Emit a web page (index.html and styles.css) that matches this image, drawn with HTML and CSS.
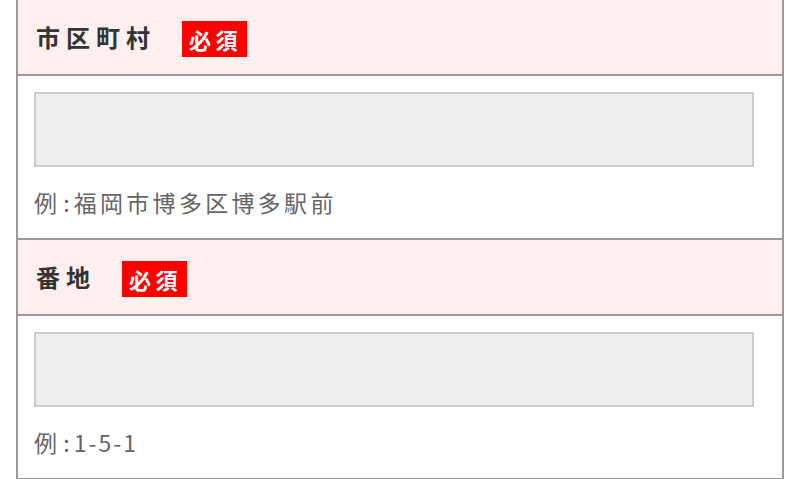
FILE: index.html
```html
<!DOCTYPE html>
<html lang="ja">
<head>
<meta charset="utf-8">
<title>住所入力</title>
<link rel="stylesheet" href="styles.css">
</head>
<body>
<div class="form">
  <section class="field">
    <div class="field-head">
      <span class="label">市区町村</span>
      <span class="badge">必須</span>
    </div>
    <div class="field-body">
      <input class="text-input" type="text">
      <p class="example">例<span class="colon">:</span>福岡市博多区博多駅前</p>
    </div>
  </section>
  <section class="field">
    <div class="field-head">
      <span class="label">番地</span>
      <span class="badge">必須</span>
    </div>
    <div class="field-body">
      <input class="text-input" type="text">
      <p class="example">例<span class="colon">:</span><span class="num">1-5-1</span></p>
    </div>
  </section>
</div>
</body>
</html>
```
FILE: styles.css
```css
html, body {
  margin: 0;
  padding: 0;
  background: #fff;
}
body {
  font-family: "Noto Sans CJK JP", "Noto Sans", sans-serif;
  overflow: hidden;
}
.form {
  margin-left: 16px;
  width: 768px;
  box-sizing: border-box;
  border-left: 2px solid #999;
  border-right: 2px solid #999;
}
.field {
  border-bottom: 2px solid #999;
}
.field-head {
  box-sizing: border-box;
  height: 76px;
  background: #fff0ef;
  border-bottom: 2px solid #999;
  display: flex;
  align-items: center;
  padding-left: 18px;
}
.label {
  font-size: 24px;
  font-weight: bold;
  letter-spacing: 6px;
  color: #333;
  line-height: 1;
}
.badge {
  margin-left: 26px;
  margin-top: 4px;
  background: #f00;
  color: #fff;
  font-size: 22px;
  font-weight: bold;
  letter-spacing: 0.2em;
  height: 36px;
  line-height: 36px;
  padding: 0 5px 0 7px;
  box-sizing: border-box;
}
.field-body {
  padding: 16px 28px 18px 16px;
}
.text-input {
  display: block;
  width: 720px;
  height: 75px;
  box-sizing: border-box;
  margin: 0;
  background: #eee;
  border: 2px solid #ccc;
  border-radius: 0;
  outline: none;
}
.example {
  margin: 17px 0 0;
  font-size: 23px;
  line-height: 36px;
  letter-spacing: 3.3px;
  color: #666;
}
.colon {
  padding-left: 3px;
  letter-spacing: 4px;
}
.num {
  letter-spacing: 2px;
}
```
